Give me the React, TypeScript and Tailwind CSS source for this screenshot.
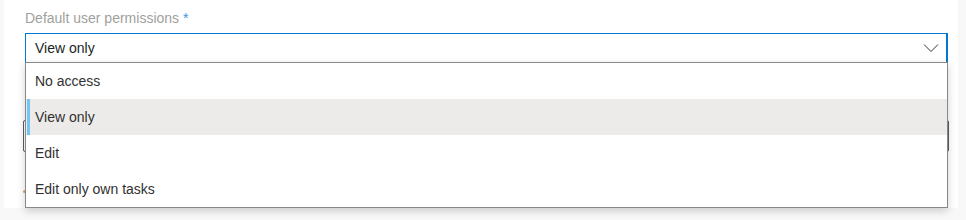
import React from 'react';

const options = ['No access', 'View only', 'Edit', 'Edit only own tasks'];

export default function App() {
  const selected = 'View only';

  return (
    <div
      className="w-[966px] h-[220px] bg-[#f8f8f8] pl-[4px] pr-[8px] overflow-hidden"
      style={{ fontFamily: '"Segoe UI", "Liberation Sans", Arial, sans-serif' }}
    >
      <div className="bg-white h-[208px] pl-[21px] pr-[6px] pt-[8px]">
        <div className="relative w-[923px] flex flex-col">
          <label className="block text-[14px] leading-[20px] text-[#a19f9d] mb-[5px]">
            Default user permissions <span className="text-[#3a96dd]">*</span>
          </label>

          {/* field */}
          <div className="h-[30px] border border-[#0078d4] border-r-2 flex items-center justify-between pl-[9px] pr-[6px]">
            <span className="text-[14px] text-[#201f1e]">View only</span>
            <svg width="16" height="10" viewBox="0 0 16 10" className="mr-[1px]">
              <path d="M1 1.5 L8 8.5 L15 1.5" fill="none" stroke="#323130" strokeWidth="1" />
            </svg>
          </div>

          {/* next field, mostly hidden behind the open list */}
          <div className="mt-[57px] ml-[-2px] w-[926px] h-[32px] border border-[#605e5c] rounded-[2px]" />
          <div className="mt-[38px] ml-[-2px] w-[3px] h-[3px] bg-[#d4a373] rounded-full" />

          {/* dropdown callout */}
          <div className="absolute left-0 top-[54px] w-[923px] bg-white border border-[#8a8886] shadow-[0_3px_8px_rgba(0,0,0,0.18)]">
            {options.map((o) => (
              <div
                key={o}
                className={`relative h-[36px] flex items-center pl-[9px] text-[14px] text-[#323130] ${o === selected ? 'bg-[#edebe9]' : 'bg-white'}`}
              >
                {o === selected && <div className="absolute left-[1px] top-0 bottom-0 w-[3px] bg-[#71c6f3]" />}
                {o}
              </div>
            ))}
          </div>
        </div>
      </div>
    </div>
  );
}
